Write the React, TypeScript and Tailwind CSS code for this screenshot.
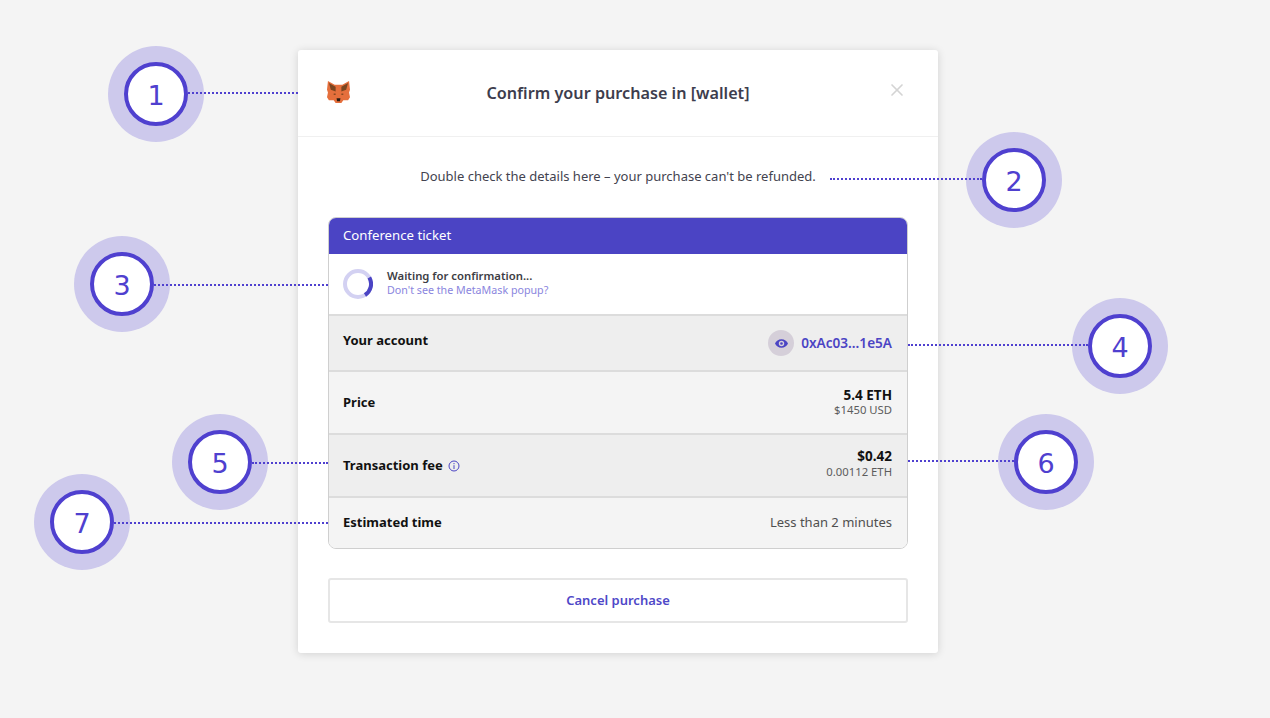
import { X } from "lucide-react";

const font = "font-['Noto_Sans',sans-serif]";

function Marker({ n, pos }: { n: number; pos: string }) {
  return (
    <div className={`absolute ${pos} w-24 h-24 rounded-full bg-[#cdc9ec] flex items-center justify-center`}>
      <div className="w-16 h-16 rounded-full bg-white border-4 border-[#4f40cf] flex items-center justify-center pt-[3px] text-[27px] leading-none text-[#4f40cf] font-['DejaVu_Sans',sans-serif] font-normal">
        {n}
      </div>
    </div>
  );
}

function Line({ pos }: { pos: string }) {
  return <div className={`absolute ${pos} h-0 border-t-2 border-dotted border-[#4f40cf]`} />;
}

function Fox() {
  return (
    <svg width="23" height="23" viewBox="0 0 24 24">
      <path d="M1 0 L8 4 H16 L23 0 L24 9 L23 12 L24 17 L22 20 L17 20 L15 23 H9 L7 20 L2 20 L0 17 L1 12 L0 9 Z" fill="#e56f3c" />
      <path d="M2 2 L9 6 L9 11 L4 9 Z M22 2 L15 6 L15 11 L20 9 Z" fill="#7a4520" />
      <path d="M7 13 h2 v1.5 h-2 Z M15 13 h2 v1.5 h-2 Z" fill="#8a4a22" />
      <path d="M10 18 h4 l-.5 3 h-3 Z" fill="#2a1c14" />
    </svg>
  );
}

export default function App() {
  return (
    <div className={`relative w-[1270px] h-[718px] bg-[#f4f4f4] overflow-hidden pl-[298px] pt-[50px] ${font}`}>
      <div className="w-[640px] h-[603px] bg-white rounded-[3px] shadow-[0_1px_8px_rgba(0,0,0,0.14)] flex flex-col">
        <div className="relative h-[87px] border-b border-[#f0f0f0] flex items-center justify-center shrink-0">
          <div className="absolute left-[29px] top-[31px]"><Fox /></div>
          <div className="text-[16.2px] font-semibold text-[#3d3d4d]">Confirm your purchase in [wallet]</div>
          <X className="absolute right-[31px] top-[30px] text-[#d4d4d4]" size={20} strokeWidth={2} />
        </div>
        <div className="h-[80px] shrink-0 flex items-start justify-center pt-[29px] text-[13px] leading-5 text-[#43434f]">
          Double check the details here – your purchase can't be refunded.
        </div>
        <div className="mx-[30px] border border-[#cfcfcf] rounded-lg overflow-hidden flex flex-col h-[332px] shrink-0">
          <div className="h-[36px] bg-[#4b44c4] text-white text-[13.2px] flex items-center px-[14px]">Conference ticket</div>
          <div className="h-[62px] bg-white border-b-2 border-[#dcdcdc] flex items-center px-[14px] gap-[14px]">
            <svg width="30" height="30" viewBox="0 0 30 30">
              <circle cx="15" cy="15" r="13" fill="none" stroke="#d3d1f2" strokeWidth="4" />
              <path d="M26.3 8.5 A13 13 0 0 1 22 26" fill="none" stroke="#4b44c4" strokeWidth="4" />
            </svg>
            <div className="flex flex-col -mt-[2px]">
              <div className="text-[11.3px] leading-[15px] font-semibold text-[#3d3d45]">Waiting for confirmation...</div>
              <div className="text-[10.7px] leading-[15px] text-[#8a85de]">Don't see the MetaMask popup?</div>
            </div>
          </div>
          <div className="h-[56px] bg-[#eeeeee] border-b-2 border-[#dcdcdc] flex items-center justify-between pl-[14px] pr-[15px]">
            <div className="text-[13px] font-bold text-[#111111] -mt-[4px]">Your account</div>
            <div className="flex items-center gap-[7px]">
              <div className="w-[26px] h-[26px] rounded-full bg-[#d5cfd9] flex items-center justify-center">
                <svg width="13" height="9" viewBox="0 0 24 16" fill="#4b44c4">
                  <path fillRule="evenodd" d="M12 0C6.5 0 2 3.4 0 8c2 4.6 6.5 8 12 8s10-3.4 12-8c-2-4.6-6.5-8-12-8Zm0 13a5 5 0 1 1 0-10 5 5 0 0 1 0 10Zm0-2.5a2.5 2.5 0 1 0 0-5 2.5 2.5 0 0 0 0 5Z" />
                </svg>
              </div>
              <div className="text-[13.6px] font-semibold text-[#4b44c4]">0xAc03...1e5A</div>
            </div>
          </div>
          <div className="h-[63px] bg-[#f4f4f4] border-b-2 border-[#dcdcdc] flex items-center justify-between pl-[14px] pr-[15px]">
            <div className="text-[13px] font-bold text-[#111111]">Price</div>
            <div className="flex flex-col items-end -mt-[2px]">
              <div className="text-[13.5px] leading-[15px] font-bold text-[#111111]">5.4 ETH</div>
              <div className="text-[11.3px] leading-[13px] text-[#5c5c5c]">$1450 USD</div>
            </div>
          </div>
          <div className="h-[63px] bg-[#eeeeee] border-b-2 border-[#dcdcdc] flex items-center justify-between pl-[14px] pr-[15px]">
            <div className="flex items-center gap-[5px]">
              <div className="text-[13px] font-bold text-[#111111]">Transaction fee</div>
              <svg width="12" height="12" viewBox="0 0 12 12" fill="none" stroke="#4b44c4">
                <circle cx="6" cy="6" r="5" />
                <path d="M6 5.2V9M6 3v1.2" />
              </svg>
            </div>
            <div className="flex flex-col items-end -mt-[5px]">
              <div className="text-[13.5px] leading-[16px] font-bold text-[#111111]">$0.42</div>
              <div className="text-[11.3px] leading-[15px] text-[#5c5c5c]">0.00112 ETH</div>
            </div>
          </div>
          <div className="flex-1 bg-[#f4f4f4] flex items-center justify-between pl-[14px] pr-[15px]">
            <div className="text-[13px] font-bold text-[#111111]">Estimated time</div>
            <div className="text-[13px] text-[#4f4f4f]">Less than 2 minutes</div>
          </div>
        </div>
        <button className="mx-[30px] mt-[29px] h-[45px] border-2 border-[#e6e6e6] rounded-[3px] text-[13px] font-semibold text-[#4f48c8]">
          Cancel purchase
        </button>
      </div>

      <Marker n={1} pos="left-[108px] top-[46px]" />
      <Marker n={2} pos="left-[966px] top-[132px]" />
      <Marker n={3} pos="left-[74px] top-[236px]" />
      <Marker n={4} pos="left-[1072px] top-[298px]" />
      <Marker n={5} pos="left-[172px] top-[414px]" />
      <Marker n={6} pos="left-[998px] top-[414px]" />
      <Marker n={7} pos="left-[34px] top-[474px]" />

      <Line pos="left-[188px] top-[92px] w-[110px]" />
      <Line pos="left-[830px] top-[178px] w-[152px]" />
      <Line pos="left-[154px] top-[284px] w-[174px]" />
      <Line pos="left-[908px] top-[344px] w-[180px]" />
      <Line pos="left-[252px] top-[462px] w-[76px]" />
      <Line pos="left-[908px] top-[460px] w-[106px]" />
      <Line pos="left-[114px] top-[522px] w-[214px]" />
    </div>
  );
}
